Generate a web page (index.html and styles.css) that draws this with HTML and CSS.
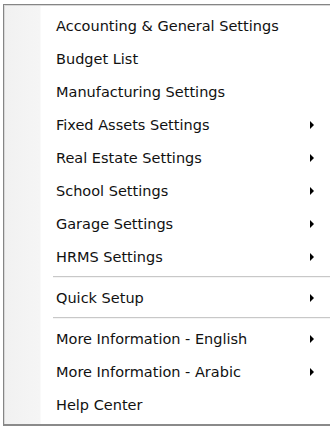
FILE: index.html
```html
<!DOCTYPE html>
<html lang="en">
<head>
    <meta charset="UTF-8">
    <meta name="viewport" content="width=device-width, initial-scale=1.0">
    <title>Settings Menu</title>
    <link rel="stylesheet" href="styles.css">
</head>
<body>

    <!-- Context menu -->
    <div class="menu">
        <div class="menu-item"><span>Accounting &amp; General Settings</span></div>
        <div class="menu-item"><span>Budget List</span></div>
        <div class="menu-item"><span>Manufacturing Settings</span></div>
        <div class="menu-item sub"><span>Fixed Assets Settings</span><i class="arrow"></i></div>
        <div class="menu-item sub"><span>Real Estate Settings</span><i class="arrow"></i></div>
        <div class="menu-item sub"><span>School Settings</span><i class="arrow"></i></div>
        <div class="menu-item sub"><span>Garage Settings</span><i class="arrow"></i></div>
        <div class="menu-item sub"><span>HRMS Settings</span><i class="arrow"></i></div>
        <div class="separator"></div>
        <div class="menu-item sub"><span>Quick Setup</span><i class="arrow"></i></div>
        <div class="separator"></div>
        <div class="menu-item sub"><span>More Information - English</span><i class="arrow"></i></div>
        <div class="menu-item sub"><span>More Information - Arabic</span><i class="arrow"></i></div>
        <div class="menu-item"><span>Help Center</span></div>
    </div>

</body>
</html>
```

FILE: styles.css
```css
body {
    margin: 0;
    background: #fff;
    font-family: "DejaVu Sans", Verdana, sans-serif;
}
.menu {
    margin: 4px 0 0 3px;
    width: 326px;
    padding: 4px 0 3px 0;
    border: 1px solid #858585;
    border-right: none;
    border-bottom: 2px solid #8a8a8a;
    box-shadow: inset 1px 1px 0 #d8d8d8;
    background: linear-gradient(to right, #f1f1f1 0, #f5f5f5 36px, #fff 37px);
}
.menu-item {
    display: flex;
    align-items: center;
    height: 33px;
    padding: 0 16px 0 52px;
    font-size: 14.5px;
    color: #111;
}
.arrow {
    margin-left: auto;
    width: 0;
    height: 0;
    border-top: 4px solid transparent;
    border-bottom: 4px solid transparent;
    border-left: 4px solid #000;
}
.separator {
    height: 8px;
    margin-left: 49px;
    background: linear-gradient(#fff 3px, #c8c8c8 3px, #c8c8c8 4px, #f4f4f4 4px, #f4f4f4 5px, #fff 5px);
}
```
